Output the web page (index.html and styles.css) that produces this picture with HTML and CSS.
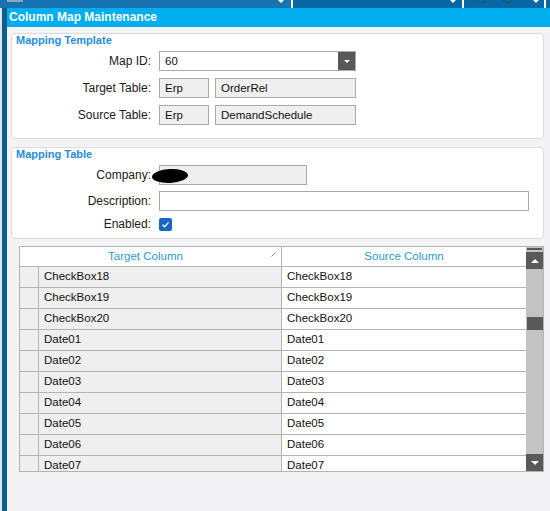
FILE: index.html
```html
<!DOCTYPE html>
<html>
<head>
<meta charset="utf-8">
<link rel="stylesheet" href="styles.css">
</head>
<body>
<div class="app">
  <div class="topbar">
    <div class="seg seg1"><span class="grip"></span><span class="arr"></span></div>
    <div class="seg seg2"><span class="arr"></span></div>
    <div class="seg seg3"><span class="ring r1"></span><span class="ring r2"></span><span class="arr"></span></div>
  </div>
  <div class="frame">
    <div class="stripe"></div>
    <div class="main">
      <div class="titlebar">Column Map Maintenance</div>
      <div class="content">
        <section class="panel p1">
          <div class="panel-title">Mapping Template</div>
          <div class="form f1">
            <label class="lbl">Map ID:</label>
            <div class="select"><span class="val">60</span><span class="dd"><span class="tri-down"></span></span></div>
            <label class="lbl">Target Table:</label>
            <div class="pair"><div class="field ro w-erp">Erp</div><div class="field ro w-tbl">OrderRel</div></div>
            <label class="lbl">Source Table:</label>
            <div class="pair"><div class="field ro w-erp">Erp</div><div class="field ro w-tbl">DemandSchedule</div></div>
          </div>
        </section>
        <section class="panel p2">
          <div class="panel-title">Mapping Table</div>
          <div class="form f2">
            <label class="lbl">Company:</label>
            <div class="field ro w-company"><span class="blob"></span></div>
            <label class="lbl">Description:</label>
            <div class="field w-desc"></div>
            <label class="lbl">Enabled:</label>
            <div class="chk"><svg width="13" height="13" viewBox="0 0 13 13"><polyline points="3.5,6.8 5.6,8.8 9.5,4.4" fill="none" stroke="#fff" stroke-width="1.3"/></svg></div>
          </div>
        </section>
        <div class="grid">
          <div class="table">
            <div class="thead">
              <div class="th th1"><span class="th-text">Target Column</span><svg class="sort" width="5" height="5" viewBox="0 0 5 5"><line x1="0.5" y1="4.5" x2="4.5" y2="0.5" stroke="#8a8a8a" stroke-width="1"/></svg></div>
              <div class="th th2"><span class="th-text">Source Column</span></div>
            </div>
            <div class="tr"><div class="sel"></div><div class="tc">CheckBox18</div><div class="sc">CheckBox18</div></div>
            <div class="tr"><div class="sel"></div><div class="tc">CheckBox19</div><div class="sc">CheckBox19</div></div>
            <div class="tr"><div class="sel"></div><div class="tc">CheckBox20</div><div class="sc">CheckBox20</div></div>
            <div class="tr"><div class="sel"></div><div class="tc">Date01</div><div class="sc">Date01</div></div>
            <div class="tr"><div class="sel"></div><div class="tc">Date02</div><div class="sc">Date02</div></div>
            <div class="tr"><div class="sel"></div><div class="tc">Date03</div><div class="sc">Date03</div></div>
            <div class="tr"><div class="sel"></div><div class="tc">Date04</div><div class="sc">Date04</div></div>
            <div class="tr"><div class="sel"></div><div class="tc">Date05</div><div class="sc">Date05</div></div>
            <div class="tr"><div class="sel"></div><div class="tc">Date06</div><div class="sc">Date06</div></div>
            <div class="tr"><div class="sel"></div><div class="tc">Date07</div><div class="sc">Date07</div></div>
          </div>
          <div class="vscroll">
            <div class="vs-cap"></div>
            <div class="vs-btn"><span class="tri-up"></span></div>
            <div class="vs-thumb"></div>
            <div class="vs-btn vs-bottom"><span class="tri-down big"></span></div>
          </div>
        </div>
      </div>
    </div>
  </div>
</div>
</body>
</html>
```
FILE: styles.css
```css
html, body {
  margin: 0;
  padding: 0;
}
body {
  background: #f3f3f5;
  font-family: "Liberation Sans", Arial, sans-serif;
  color: #1a1a1a;
}
.app {
  width: 550px;
  height: 511px;
  overflow: hidden;
  display: flex;
  flex-direction: column;
}

/* top strip */
.topbar {
  height: 8px;
  display: flex;
  flex-shrink: 0;
  background: #0a67a5;
}
.seg {
  height: 8px;
  box-sizing: border-box;
  display: flex;
  align-items: flex-start;
  border-right: 2px dashed #ffffff;
}
.seg1 { width: 293px; background: #1672b0; }
.seg2 { width: 171px; background: #0867a5; }
.seg3 { width: 82px; background: #0867a5; }
.grip {
  width: 16px;
  height: 2px;
  margin-left: 7px;
  background: #8fa6b8;
  margin-right: auto;
}
.arr {
  width: 0;
  height: 0;
  border-left: 3px solid transparent;
  border-right: 3px solid transparent;
  border-top: 3px solid #ffffff;
}
.seg1 .arr { margin-right: 7px; }
.seg2 .arr { margin-left: auto; margin-right: 6px; }
.seg3 .arr { margin-left: auto; margin-right: 5px; }
.ring {
  width: 11px;
  height: 11px;
  border: 1px solid #34495c;
  border-radius: 50%;
  margin-top: -10px;
}
.r1 { margin-left: 11px; }
.r2 { margin-left: 13px; }

/* frame */
.frame {
  flex: 1;
  display: flex;
  min-height: 0;
}
.stripe {
  width: 7px;
  flex-shrink: 0;
  box-sizing: border-box;
  border-left: 2px solid #e4e4e6;
  background: #0b5e8f;
}
.main {
  flex: 1;
  display: flex;
  flex-direction: column;
}
.titlebar {
  height: 19px;
  line-height: 19px;
  background: #00adef;
  color: #ffffff;
  font-weight: bold;
  font-size: 12px;
  padding-left: 2px;
  flex-shrink: 0;
}
.content {
  padding: 6px 17px 0 4px;
}

/* panels */
.panel {
  background: #ffffff;
  border: 1px solid #dcdcdc;
  border-radius: 4px;
  box-sizing: border-box;
}
.p1 { height: 106px; }
.p2 { margin-top: 8px; height: 92px; }
.panel-title {
  font-size: 11px;
  font-weight: bold;
  color: #1e8edb;
  height: 13px;
  line-height: 13px;
  padding-left: 4px;
}
.form {
  display: grid;
  grid-template-columns: 139px auto;
  column-gap: 8px;
  align-items: center;
  justify-items: start;
  margin-top: 4px;
}
.f1 { row-gap: 7px; grid-template-rows: 20px 20px 20px; }
.f2 { row-gap: 6px; grid-template-rows: 20px 20px 14px; margin-top: 4px; }
.lbl {
  justify-self: end;
  font-size: 12px;
  line-height: 14px;
  color: #1a1a1a;
}
.field {
  height: 20px;
  box-sizing: border-box;
  border: 1px solid #aaaaaa;
  font-size: 11.5px;
  line-height: 18px;
  padding-left: 5px;
  background: #ffffff;
  color: #111;
  position: relative;
}
.ro { background: #efefef; }
.pair {
  display: flex;
  gap: 6px;
}
.w-erp { width: 50px; }
.w-tbl { width: 141px; }
.w-company { width: 148px; }
.w-desc { width: 370px; }
.select {
  width: 197px;
  height: 20px;
  box-sizing: border-box;
  border: 1px solid #aaaaaa;
  display: flex;
  font-size: 11.5px;
  line-height: 18px;
  background: #ffffff;
}
.select .val {
  flex: 1;
  padding-left: 5px;
  color: #111;
}
.dd {
  width: 17px;
  background: #585858;
  display: flex;
  align-items: center;
  justify-content: center;
}
.tri-down {
  width: 0;
  height: 0;
  border-left: 3px solid transparent;
  border-right: 3px solid transparent;
  border-top: 3px solid #ffffff;
}
.tri-down.big {
  border-left-width: 4px;
  border-right-width: 4px;
  border-top-width: 4px;
}
.tri-up {
  width: 0;
  height: 0;
  border-left: 4px solid transparent;
  border-right: 4px solid transparent;
  border-bottom: 4px solid #ffffff;
}
.blob {
  position: absolute;
  left: -8px;
  top: 3px;
  width: 36px;
  height: 14px;
  border-radius: 50%;
  background: #000000;
  transform: rotate(-3deg);
}
.chk {
  width: 13px;
  height: 13px;
  border-radius: 2px;
  background: #1767c2;
  display: flex;
}

/* grid */
.grid {
  margin-top: 7px;
  margin-left: 8px;
  width: 525px;
  height: 226px;
  box-sizing: border-box;
  border: 1px solid #b3b3b3;
  display: flex;
  background: #ffffff;
}
.table {
  width: 506px;
  overflow: hidden;
  font-size: 11.5px;
}
.thead {
  display: flex;
  height: 20px;
  box-sizing: border-box;
  border-bottom: 1px solid #b3b3b3;
  background: #ffffff;
  color: #2a9bcb;
  line-height: 19px;
}
.th {
  display: flex;
  align-items: center;
}
.th1 {
  width: 262px;
  box-sizing: border-box;
  border-right: 1px solid #b3b3b3;
}
.th2 { flex: 1; }
.th-text {
  flex: 1;
  text-align: center;
}
.sort {
  margin-right: 5px;
  margin-top: -5px;
}
.tr {
  display: flex;
  height: 21px;
  box-sizing: border-box;
  border-bottom: 1px solid #b3b3b3;
  line-height: 18px;
  color: #111;
}
.sel {
  width: 19px;
  box-sizing: border-box;
  border-right: 1px solid #b3b3b3;
  background: #efefef;
}
.tc {
  width: 243px;
  box-sizing: border-box;
  border-right: 1px solid #b3b3b3;
  background: #efefef;
  padding-left: 5px;
}
.sc {
  flex: 1;
  padding-left: 5px;
  background: #ffffff;
}
.vscroll {
  width: 17px;
  background: #c3c3c3;
  display: flex;
  flex-direction: column;
}
.vs-cap {
  height: 2px;
  margin: 1px 1px 0 1px;
  background: #5a5a5a;
}
.vs-btn {
  height: 17px;
  margin-top: 2px;
  background: #595959;
  display: flex;
  align-items: center;
  justify-content: center;
}
.vs-thumb {
  height: 13px;
  margin-top: 48px;
  margin-left: 1px;
  background: #595959;
}
.vs-bottom {
  margin-top: auto;
}
```
